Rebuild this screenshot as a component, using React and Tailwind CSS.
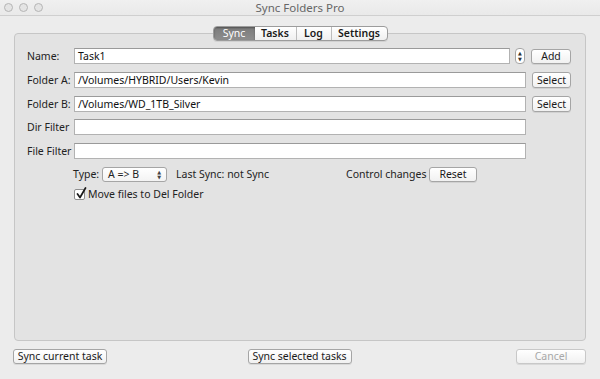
import React from "react";

const font = { fontFamily: '"Noto Sans", "Open Sans", "DejaVu Sans", sans-serif' };

function Btn({ children, className = "", disabled = false }) {
  return (
    <div
      className={
        "flex items-center justify-center whitespace-nowrap rounded-[3px] border bg-gradient-to-b from-[#ffffff] to-[#f1f1f1] text-[10.5px] leading-none shadow-[0_1px_0_rgba(0,0,0,0.08)] " +
        (disabled ? "border-[#c8c8c8] text-[#a8a8a8] " : "border-[#a5a5a5] text-[#1a1a1a] ") +
        className
      }
    >
      {children}
    </div>
  );
}

function Field({ value = "", className = "" }) {
  return (
    <div
      className={
        "flex h-[16px] items-center whitespace-nowrap border border-[#b2b2b2] border-t-[#9a9a9a] bg-white pl-[3px] text-[10.5px] leading-none text-[#111] " +
        className
      }
    >
      {value}
    </div>
  );
}

function Label({ children }) {
  return <div className="w-[47px] shrink-0 whitespace-nowrap text-[10.5px] leading-none text-[#222]">{children}</div>;
}

export default function App() {
  return (
    <div className="flex h-[379px] w-[600px] flex-col overflow-hidden bg-[#ececec]" style={font}>
      {/* title bar */}
      <div className="grid h-[16px] grid-cols-[1fr_auto_1fr] items-center border-b border-[#cfcfcf] bg-gradient-to-b from-[#f0f0f0] to-[#e9e9e9]">
        <div className="flex items-center gap-[6px] pl-[4px]">
          <div className="h-[9px] w-[9px] rounded-full border border-[#b5b5b5] bg-[#e4e4e4]" />
          <div className="h-[9px] w-[9px] rounded-full border border-[#b5b5b5] bg-[#e4e4e4]" />
          <div className="h-[9px] w-[9px] rounded-full border border-[#b5b5b5] bg-[#e4e4e4]" />
        </div>
        <div className="text-[11.5px] leading-none text-[#666]">Sync Folders Pro</div>
        <div />
      </div>

      <div className="flex flex-col px-[14px]">
        {/* tabs */}
        <div className="relative z-10 mb-[-8px] mt-[10px] flex h-[15px] self-center overflow-hidden rounded-[4px] border border-[#9c9c9c] bg-gradient-to-b from-white to-[#f0f0f0] text-[10.5px] leading-none shadow-[0_1px_0_rgba(0,0,0,0.08)]">
          <div className="flex w-[41px] items-center justify-center bg-gradient-to-b from-[#7a7a7a] to-[#8e8e8e] text-white shadow-[inset_0_1px_2px_rgba(0,0,0,0.35)]">Sync</div>
          <div className="flex w-[42px] items-center justify-center border-r border-[#bdbdbd] font-semibold text-[#1a1a1a]">Tasks</div>
          <div className="flex w-[35px] items-center justify-center border-r border-[#bdbdbd] font-semibold text-[#1a1a1a]">Log</div>
          <div className="flex w-[55px] items-center justify-center font-semibold text-[#1a1a1a]">Settings</div>
        </div>

        {/* group box */}
        <div className="flex h-[308px] flex-col rounded-[4px] border border-[#c6c6c6] bg-[#e3e3e3] pl-[12px] pt-[14px]">
          <div className="flex h-[16px] items-center">
            <Label>Name:</Label>
            <Field value="Task1" className="w-[436px]" />
            <div className="ml-[5px] flex h-[16px] w-[10px] flex-col items-center justify-center rounded-[4px] border border-[#a5a5a5] bg-white text-[5px] leading-[6px] text-[#333]">
              <span>▲</span>
              <span>▼</span>
            </div>
            <Btn className="ml-[6px] h-[15px] w-[40px]">Add</Btn>
          </div>

          <div className="mt-[8px] flex h-[16px] items-center">
            <Label>Folder A:</Label>
            <Field value="/Volumes/HYBRID/Users/Kevin" className="w-[452px]" />
            <Btn className="ml-[6px] h-[16px] w-[39px]">Select</Btn>
          </div>

          <div className="mt-[8px] flex h-[16px] items-center">
            <Label>Folder B:</Label>
            <Field value="/Volumes/WD_1TB_Silver" className="w-[452px]" />
            <Btn className="ml-[6px] h-[16px] w-[39px]">Select</Btn>
          </div>

          <div className="mt-[7px] flex h-[16px] items-center">
            <Label>Dir Filter</Label>
            <Field className="w-[452px]" />
          </div>

          <div className="mt-[8px] flex h-[16px] items-center">
            <Label>File Filter</Label>
            <Field className="w-[452px]" />
          </div>

          <div className="mt-[8px] flex h-[15px] items-center whitespace-nowrap text-[10.5px] leading-none text-[#222]">
            <div className="ml-[46px] w-[29px]">Type:</div>
            <div className="flex h-[15px] w-[65px] items-center justify-between rounded-[3px] border border-[#a5a5a5] bg-gradient-to-b from-white to-[#f3f3f3] pl-[5px] pr-[5px]">
              <span>A =&gt; B</span>
              <span className="flex flex-col text-[5px] leading-[5px] text-[#444]">
                <span>▲</span>
                <span>▼</span>
              </span>
            </div>
            <div className="ml-[9px] w-[170px]">Last Sync: not Sync</div>
            <div className="w-[83px]">Control changes</div>
            <Btn className="h-[15px] w-[48px]">Reset</Btn>
          </div>

          <div className="ml-[47px] mt-[6px] flex h-[12px] items-center whitespace-nowrap text-[10.5px] leading-none text-[#222]">
            <div className="relative h-[11px] w-[11px] rounded-[2px] border border-[#8f8f8f] bg-white">
              <svg className="absolute left-[1px] top-[-3px]" width="11" height="12" viewBox="0 0 11 12">
                <path d="M1.5 7 L4 10.5 L9.5 1" fill="none" stroke="#1a1a1a" strokeWidth="1.7" strokeLinecap="round" strokeLinejoin="round" />
              </svg>
            </div>
            <div className="ml-[3px]">Move files to Del Folder</div>
          </div>
        </div>

        {/* bottom buttons */}
        <div className="ml-[-1px] mt-[8px] grid grid-cols-[1fr_auto_1fr] items-center">
          <Btn className="h-[15px] w-[94px] justify-self-start">Sync current task</Btn>
          <Btn className="h-[15px] w-[104px]">Sync selected tasks</Btn>
          <Btn disabled className="h-[15px] w-[70px] justify-self-end">Cancel</Btn>
        </div>
      </div>
    </div>
  );
}
